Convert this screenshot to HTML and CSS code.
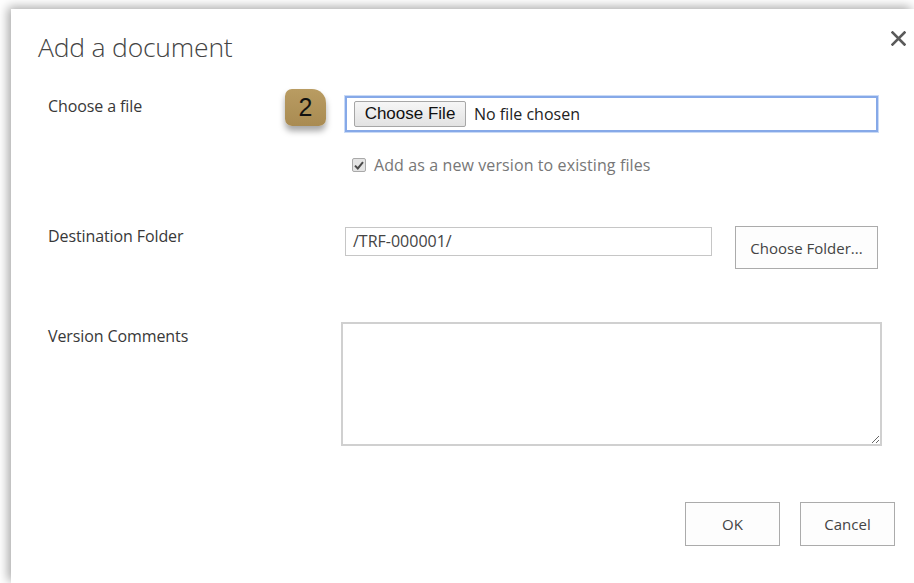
FILE: index.html
```html
<!DOCTYPE html>
<html lang="en">
<head>
<meta charset="utf-8">
<title>Add a document</title>
<link rel="stylesheet" href="styles.css">
</head>
<body>
<div class="dialog">
  <header class="dlg-head">
    <h1 class="dlg-title">Add a document</h1>
    <button class="dlg-close" type="button" aria-label="Close">
      <svg width="15" height="15" viewBox="0 0 15 15"><path d="M1.5 1.5 13.5 13.5M13.5 1.5 1.5 13.5" stroke="#5a5a5a" stroke-width="2.6" stroke-linecap="square" fill="none"/></svg>
    </button>
  </header>

  <div class="form">
    <div class="row row-file">
      <label class="lbl">Choose a file</label>
      <div class="ctrl">
        <div class="file-box">
          <span class="file-btn">Choose File</span>
          <span class="file-name">No file chosen</span>
        </div>
        <span class="step-badge">2</span>
        <div class="check-line">
          <span class="check">
            <svg width="10" height="9" viewBox="0 0 10 9"><path d="M1 4.6 3.8 7.4 9 1.2" stroke="#4a4a4a" stroke-width="2" fill="none"/></svg>
          </span>
          <span class="check-text">Add as a new version to existing files</span>
        </div>
      </div>
    </div>

    <div class="row row-dest">
      <label class="lbl">Destination Folder</label>
      <div class="ctrl dest-ctrl">
        <div class="text-input">/TRF-000001/</div>
        <button class="btn btn-folder" type="button">Choose Folder...</button>
      </div>
    </div>

    <div class="row row-comments">
      <label class="lbl lbl-comments">Version Comments</label>
      <div class="ctrl">
        <textarea class="comments"></textarea>
      </div>
    </div>
  </div>

  <footer class="dlg-foot">
    <button class="btn btn-action" type="button">OK</button>
    <button class="btn btn-action" type="button">Cancel</button>
  </footer>
</div>
</body>
</html>
```

FILE: styles.css
```css
* { box-sizing: border-box; }

html, body {
  margin: 0;
  height: 100%;
  background: #fff;
  overflow: hidden;
}

body {
  padding: 9px 0 0 11px;
  font-family: "Open Sans", "Noto Sans", sans-serif;
  color: #333;
}

.dialog {
  position: relative;
  height: 100%;
  background: #fff;
  box-shadow: -3px -2px 10px rgba(0, 0, 0, 0.35);
}

.dlg-head {
  display: flex;
  justify-content: space-between;
  align-items: flex-start;
  padding: 21px 8px 0 27px;
}

.dlg-title {
  margin: 0;
  font-weight: 300;
  font-size: 26.5px;
  line-height: 34px;
  color: #444;
  letter-spacing: -0.2px;
}

.dlg-close {
  margin-top: 1px;
  padding: 0;
  border: 0;
  background: none;
  width: 15px;
  height: 15px;
  display: block;
}
.dlg-close svg { display: block; }

.form {
  padding: 32px 32px 0 37px;
}

.row {
  display: grid;
  grid-template-columns: 293px 1fr;
  align-items: start;
}

.lbl {
  font-size: 16px;
  line-height: 20px;
  color: #383838;
  letter-spacing: -0.1px;
}

.ctrl { position: relative; }

/* file picker */
.file-box {
  margin: 0 4px 0 4px;
  height: 36px;
  border: 2px solid #86a9e8;
  box-shadow: 0 0 0 1px #c9daf6;
  display: flex;
  align-items: center;
  padding-left: 7px;
}

.file-btn {
  height: 26px;
  width: 112px;
  border: 1px solid #a6a6a6;
  border-radius: 2px;
  background: linear-gradient(#f6f6f6, #e2e2e2);
  font-family: "Liberation Sans", Arial, sans-serif;
  font-size: 17px;
  color: #111;
  display: flex;
  align-items: center;
  justify-content: center;
}

.file-name {
  margin-left: 8px;
  font-size: 16px;
  color: #222;
}

.step-badge {
  position: absolute;
  left: -56px;
  top: -7px;
  width: 41px;
  height: 37px;
  border-radius: 7px 14px 7px 7px;
  background: linear-gradient(#b99c62, #a98b52);
  box-shadow: 0 5px 6px rgba(0, 0, 0, 0.35);
  font-family: "Liberation Sans", Arial, sans-serif;
  font-size: 25px;
  line-height: 37px;
  text-align: center;
  color: #111;
}

.check-line {
  margin: 24px 0 0 11px;
  display: flex;
  align-items: center;
  height: 18px;
}

.check {
  width: 14px;
  height: 14px;
  border: 1px solid #a9a9a9;
  border-radius: 2px;
  background: #e4e4e4;
  display: flex;
  align-items: center;
  justify-content: center;
}

.check-text {
  margin-left: 8px;
  font-size: 16px;
  color: #777;
  letter-spacing: 0.1px;
}

/* destination folder */
.row-dest { margin-top: 52px; }

.dest-ctrl {
  display: flex;
  align-items: flex-start;
  padding-left: 4px;
}

.text-input {
  margin-top: 1px;
  width: 367px;
  height: 29px;
  border: 1px solid #c6c6c6;
  padding: 0 7px;
  font-size: 16px;
  line-height: 27px;
  color: #444;
}

.btn {
  font-family: "Open Sans", "Noto Sans", sans-serif;
  background: #fdfdfd;
  border: 1px solid #ababab;
  color: #444;
  font-size: 15px;
  padding: 0;
}

.btn-folder {
  margin-left: 23px;
  width: 143px;
  height: 43px;
}

/* comments */
.row-comments { margin-top: 53px; }

.lbl-comments { margin-top: 4px; }

.comments {
  display: block;
  width: 541px;
  height: 124px;
  border: 2px solid #d0d0d0;
  resize: both;
  font-family: inherit;
  margin: 0;
}

/* footer */
.dlg-foot {
  display: flex;
  justify-content: flex-end;
  gap: 20px;
  padding: 56px 19px 0 0;
}

.btn-action {
  width: 95px;
  height: 44px;
}
```
